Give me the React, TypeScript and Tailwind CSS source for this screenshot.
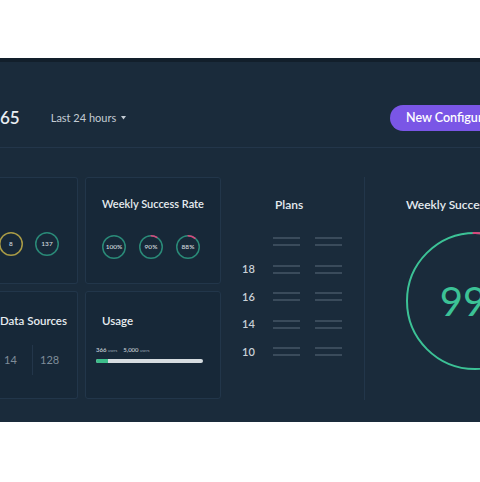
import React from "react";

const font = { fontFamily: "Lato, 'Open Sans', sans-serif" };

type RingProps = {
  size: number;
  stroke: number;
  color: string;
  pink?: number;
  children?: React.ReactNode;
  className?: string;
};

function Ring({ size, stroke, color, pink = 0, children, className }: RingProps) {
  const r = (size - stroke) / 2;
  const c = 2 * Math.PI * r;
  return (
    <div className={`relative shrink-0 ${className ?? ""}`} style={{ width: size, height: size }}>
      <svg width={size} height={size} className="absolute inset-0">
        <circle cx={size / 2} cy={size / 2} r={r} fill="none" stroke={color} strokeWidth={stroke} />
        {pink > 0 && (
          <circle
            cx={size / 2}
            cy={size / 2}
            r={r}
            fill="none"
            stroke="#d9467c"
            strokeWidth={stroke}
            strokeDasharray={`${pink * c} ${c}`}
            transform={`rotate(-92 ${size / 2} ${size / 2})`}
          />
        )}
      </svg>
      <div className="absolute inset-0 flex items-center justify-center">{children}</div>
    </div>
  );
}

function SmallRing({ label, color, pink }: { label: string; color: string; pink?: number }) {
  return (
    <Ring size={24} stroke={1.5} color={color} pink={pink}>
      <span className="text-[6.5px] font-semibold text-[#cfd7de]">{label}</span>
    </Ring>
  );
}

function Bars() {
  return (
    <div className="flex flex-col gap-[5px]">
      <div className="h-[2px] w-[27px] bg-[#3a4b5b]" />
      <div className="h-[2px] w-[27px] bg-[#3a4b5b]" />
    </div>
  );
}

function PlanRow({ label }: { label?: string }) {
  return (
    <div className="flex h-[27.5px] items-center">
      <span className="w-[31px] text-[11px] font-semibold text-[#c9d1d8]">{label ?? ""}</span>
      <div className="flex gap-[15px]">
        <Bars />
        <Bars />
      </div>
    </div>
  );
}

const card = "rounded-[3px] border border-[#22364a] bg-[#172838]";

export default function App() {
  return (
    <div className="h-[482px] w-[480px] bg-white pt-[58px]" style={font}>
      <div className="h-[364px] overflow-hidden border-t-4 border-[#121f2b] bg-[#1a2b3b]">
        {/* header */}
        <div className="flex items-center border-b border-[#23364a] pb-[16px] pt-[43px]">
          <div className="flex h-[26px] flex-1 items-center">
            <span className="text-[17px] font-semibold text-[#e9eef2]">65</span>
            <button className="ml-[31px] flex items-center gap-[5px] text-[11px] text-[#c3ccd4]">
              Last 24 hours
              <svg width="5" height="4" viewBox="0 0 5 4">
                <path d="M0 0h5L2.5 3.5z" fill="#c3ccd4" />
              </svg>
            </button>
          </div>
          <div className="ml-auto flex h-[26px] w-[90px] shrink-0 items-center rounded-l-full bg-[#7a56e6] pl-[16px]">
            <span className="whitespace-nowrap text-[12.5px] font-semibold text-white">New Configuration</span>
          </div>
        </div>

        {/* body */}
        <div className="flex pt-[29px]">
          <div className="grid w-[221px] shrink-0 grid-cols-[78px_136px] grid-rows-[107px_108px] gap-[7px]">
            <div className={`${card} flex items-center rounded-l-none border-l-0 pt-[26px]`}>
              <div className="-ml-px flex gap-[12px]">
                <SmallRing label="8" color="#a99b46" />
                <SmallRing label="137" color="#2a8a78" />
              </div>
            </div>

            <div className={`${card} flex flex-col pl-[16px] pt-[18px]`}>
              <span className="text-[11px] font-semibold text-[#e6ecf0]">Weekly Success Rate</span>
              <div className="mt-[22px] flex gap-[13px]">
                <SmallRing label="100%" color="#2a8a78" />
                <SmallRing label="90%" color="#2a8a78" pink={0.1} />
                <SmallRing label="88%" color="#2a8a78" pink={0.12} />
              </div>
            </div>

            <div className={`${card} flex flex-col rounded-l-none border-l-0 pt-[20px]`}>
              <span className="whitespace-nowrap text-[11.5px] font-semibold text-[#e6ecf0]">Data Sources</span>
              <div className="mt-[16px] flex items-center">
                <span className="w-[32px] pl-[4px] text-[11px] text-[#7f8d99]">14</span>
                <div className="h-[30px] w-px bg-[#23364a]" />
                <span className="pl-[7px] text-[11px] text-[#7f8d99]">128</span>
              </div>
            </div>

            <div className={`${card} flex flex-col pl-[10px] pr-[17px] pt-[20px]`}>
              <span className="pl-[6px] text-[11.5px] font-semibold text-[#e6ecf0]">Usage</span>
              <div className="mt-[16px] flex items-baseline gap-[6px] text-[6px] font-semibold text-[#c6cfd6]">
                <span>
                  366 <span className="text-[4px] text-[#8794a0]">users</span>
                </span>
                <span>
                  5,000 <span className="text-[4px] text-[#8794a0]">users</span>
                </span>
              </div>
              <div className="mt-[5px] h-[4px] w-full overflow-hidden rounded-full bg-[#d6dce0]">
                <div className="h-full w-[12px] bg-[#3dbd8a]" />
              </div>
            </div>
          </div>

          <div className="ml-px flex h-[223px] w-[143px] shrink-0 flex-col border-r border-[#22364a] pl-[20px] pt-[19px]">
            <span className="pl-[33px] text-[12px] font-semibold text-[#e6ecf0]">Plans</span>
            <div className="mt-[14px] flex flex-col">
              <PlanRow />
              <PlanRow label="18" />
              <PlanRow label="16" />
              <PlanRow label="14" />
              <PlanRow label="10" />
            </div>
          </div>

          <div className="flex flex-1 flex-col pl-[41px] pt-[19px]">
            <span className="whitespace-nowrap text-[12px] font-semibold text-[#e6ecf0]">Weekly Success Rate</span>
            <Ring size={138} stroke={2} color="#3cc296" pink={0.06} className="mt-[18px]">
              <span className="pl-[8px] text-[40px] font-normal text-[#3cc296]">99%</span>
            </Ring>
          </div>
        </div>
      </div>
    </div>
  );
}
